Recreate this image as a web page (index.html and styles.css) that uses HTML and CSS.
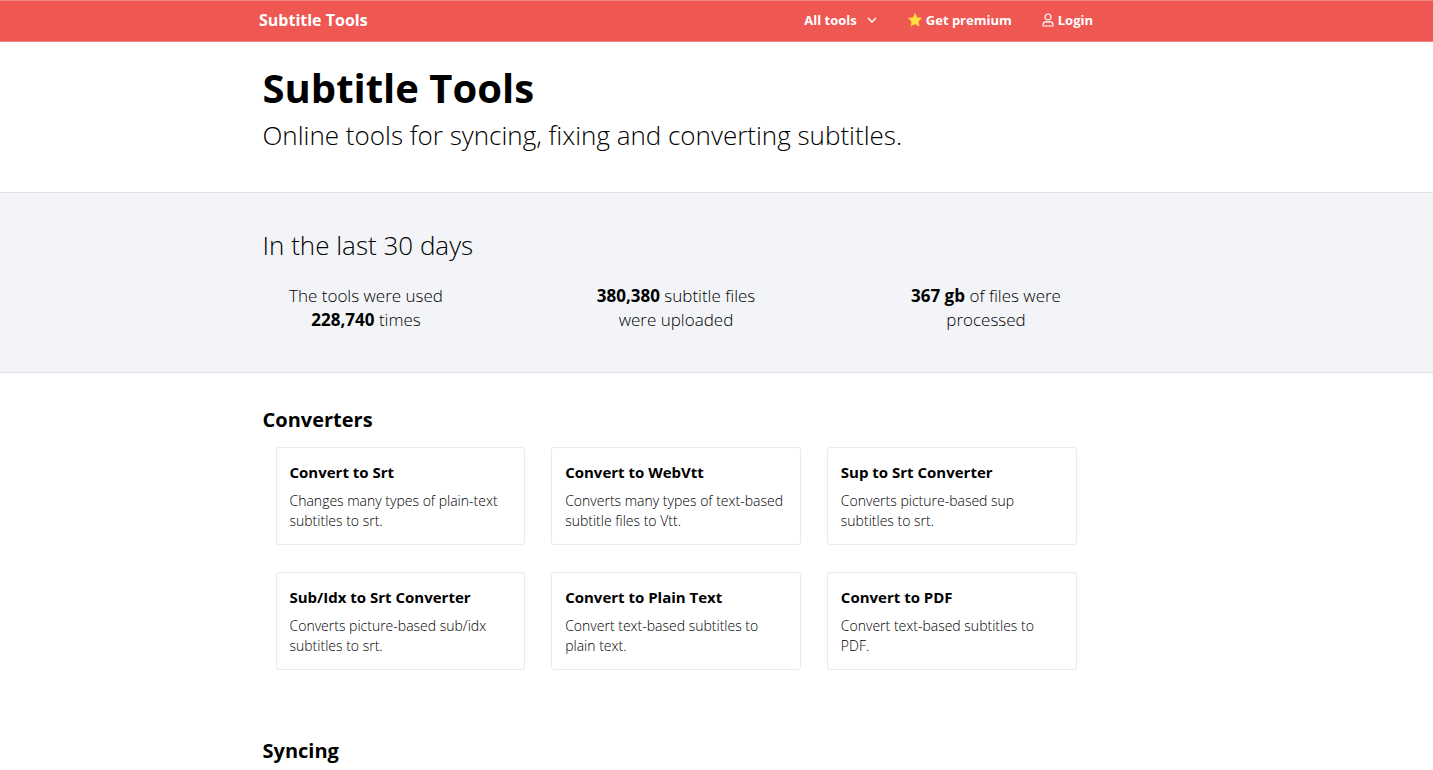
FILE: index.html
```html
<!DOCTYPE html>
<html lang="en">
<head>
<meta charset="utf-8">
<title>Subtitle Tools</title>
<link rel="stylesheet" href="styles.css">
</head>
<body>
<header class="topbar">
  <div class="topbar-inner">
    <a class="brand" href="#">Subtitle Tools</a>
    <nav class="nav">
      <button class="nav-item nav-tools" type="button">All tools
        <svg class="chevron" viewBox="-1 -1 12 12" aria-hidden="true"><path d="M1 3l4 4 4-4" fill="none" stroke="currentColor" stroke-width="1.4"/></svg>
      </button>
      <a class="nav-item nav-premium" href="#">
        <svg class="star" viewBox="0 0 24 24" aria-hidden="true"><path d="M12 .8l3.400 7.200 7.900 1-5.800 5.500 1.500 7.900-7-3.900-7 3.900 1.500-7.900L.7 9l7.900-1z" fill="#ffdf3d" stroke="#ffdf3d" stroke-linejoin="round"/></svg>
        Get premium
      </a>
      <a class="nav-item" href="#">
        <svg class="user" viewBox="0 0 12 14" aria-hidden="true"><g fill="none" stroke="currentColor" stroke-width="1.200"><circle cx="6" cy="4" r="3"/><path d="M1 13v-1C1 10 2.300 9 3.600 8.600q2.400 1 4.800 0C9.700 9 11 10 11 12v1z" stroke-linejoin="round"/></g></svg>
        Login
      </a>
    </nav>
  </div>
</header>
<main>
  <section class="hero">
    <div class="container">
      <h1 class="hero-title">Subtitle Tools</h1>
      <p class="hero-text">Online tools for syncing, fixing and converting subtitles.</p>
    </div>
  </section>
  <section class="stats">
    <div class="container">
      <h2 class="stats-title">In the last 30 days</h2>
      <div class="stats-row">
        <p class="stat">The tools were used<br><strong>228,740</strong> times</p>
        <p class="stat"><strong>380,380</strong> subtitle files<br>were uploaded</p>
        <p class="stat"><strong>367 gb</strong> of files were<br>processed</p>
      </div>
    </div>
  </section>
  <section class="tools">
    <div class="container">
      <h2 class="tools-title">Converters</h2>
      <div class="cards">
        <a class="card" href="#"><h3 class="card-title">Convert to Srt</h3><p class="card-text">Changes many types of plain-text subtitles to srt.</p></a>
        <a class="card" href="#"><h3 class="card-title">Convert to WebVtt</h3><p class="card-text">Converts many types of text-based subtitle files to Vtt.</p></a>
        <a class="card" href="#"><h3 class="card-title">Sup to Srt Converter</h3><p class="card-text">Converts picture-based sup subtitles to srt.</p></a>
        <a class="card" href="#"><h3 class="card-title">Sub/Idx to Srt Converter</h3><p class="card-text">Converts picture-based sub/idx subtitles to srt.</p></a>
        <a class="card" href="#"><h3 class="card-title">Convert to Plain Text</h3><p class="card-text">Convert text-based subtitles to plain text.</p></a>
        <a class="card" href="#"><h3 class="card-title">Convert to PDF</h3><p class="card-text">Convert text-based subtitles to PDF.</p></a>
      </div>
    </div>
  </section>
  <section class="syncing">
    <div class="container">
      <h2 class="tools-title">Syncing</h2>
    </div>
  </section>
</main>
</body>
</html>
```
FILE: styles.css
```css
* { box-sizing: border-box; }
body { margin: 0; font-family: "Open Sans", sans-serif; font-weight: 300; color: #000; background: #fff; }
h1, h2, h3, p { margin: 0; }
a { color: inherit; text-decoration: none; }
.topbar, .hero, .stats, .tools, .syncing { padding-right: 81px; }
.topbar { background: #ef5753; color: #fff; border: solid #f28582; border-width: 1px 0; }
.topbar-inner { display: flex; align-items: center; justify-content: space-between; max-width: 834px; padding-bottom: 2px; height: 40px; margin: 0 auto; }
.brand { font-size: 16px; font-weight: 700; }
.nav { display: flex; align-items: center; gap: 30px; font-size: 13px; font-weight: 700; }
.nav-item { display: flex; align-items: center; gap: 4px; }
.nav-tools { border: 0; padding: 0; background: none; color: inherit; font: inherit; gap: 9px; }
.chevron { width: 12px; height: 12px; }
.star { width: 14px; height: 14px; }
.user { width: 12px; height: 14px; }
.container { max-width: 827px; margin: 0 auto; }
.hero { padding-top: 19px; padding-bottom: 37px; }
.hero-title { font-size: 40px; line-height: 54px; font-weight: 700; }
.hero-text { font-size: 26px; line-height: 40px; }
.stats { background: #f3f4f7; border: solid #dfe1e4; border-width: 1px 0; padding-top: 33px; padding-bottom: 40px; }
.stats-title { font-size: 26px; line-height: 38px; font-weight: 300; }
.stats-row { display: flex; justify-content: space-between; padding-top: 20px; }
.stat { width: 207px; font-size: 17px; line-height: 24px; text-align: center; }
.stat strong { font-weight: 700; }
.tools { padding-top: 33px; }
.tools-title { font-size: 20px; line-height: 28px; font-weight: 700; }
.cards { display: grid; grid-template-columns: repeat(3, 1fr); gap: 27px 26px; padding: 13px 13px 0; }
.card { border: 1px solid #e8eaed; border-radius: 3px; padding: 13px; }
.card-title { font-size: 15px; line-height: 22px; font-weight: 700; }
.card-text { font-size: 14px; line-height: 20px; padding-top: 8px; }
.syncing { padding-top: 67px; padding-bottom: 6px; }
```
